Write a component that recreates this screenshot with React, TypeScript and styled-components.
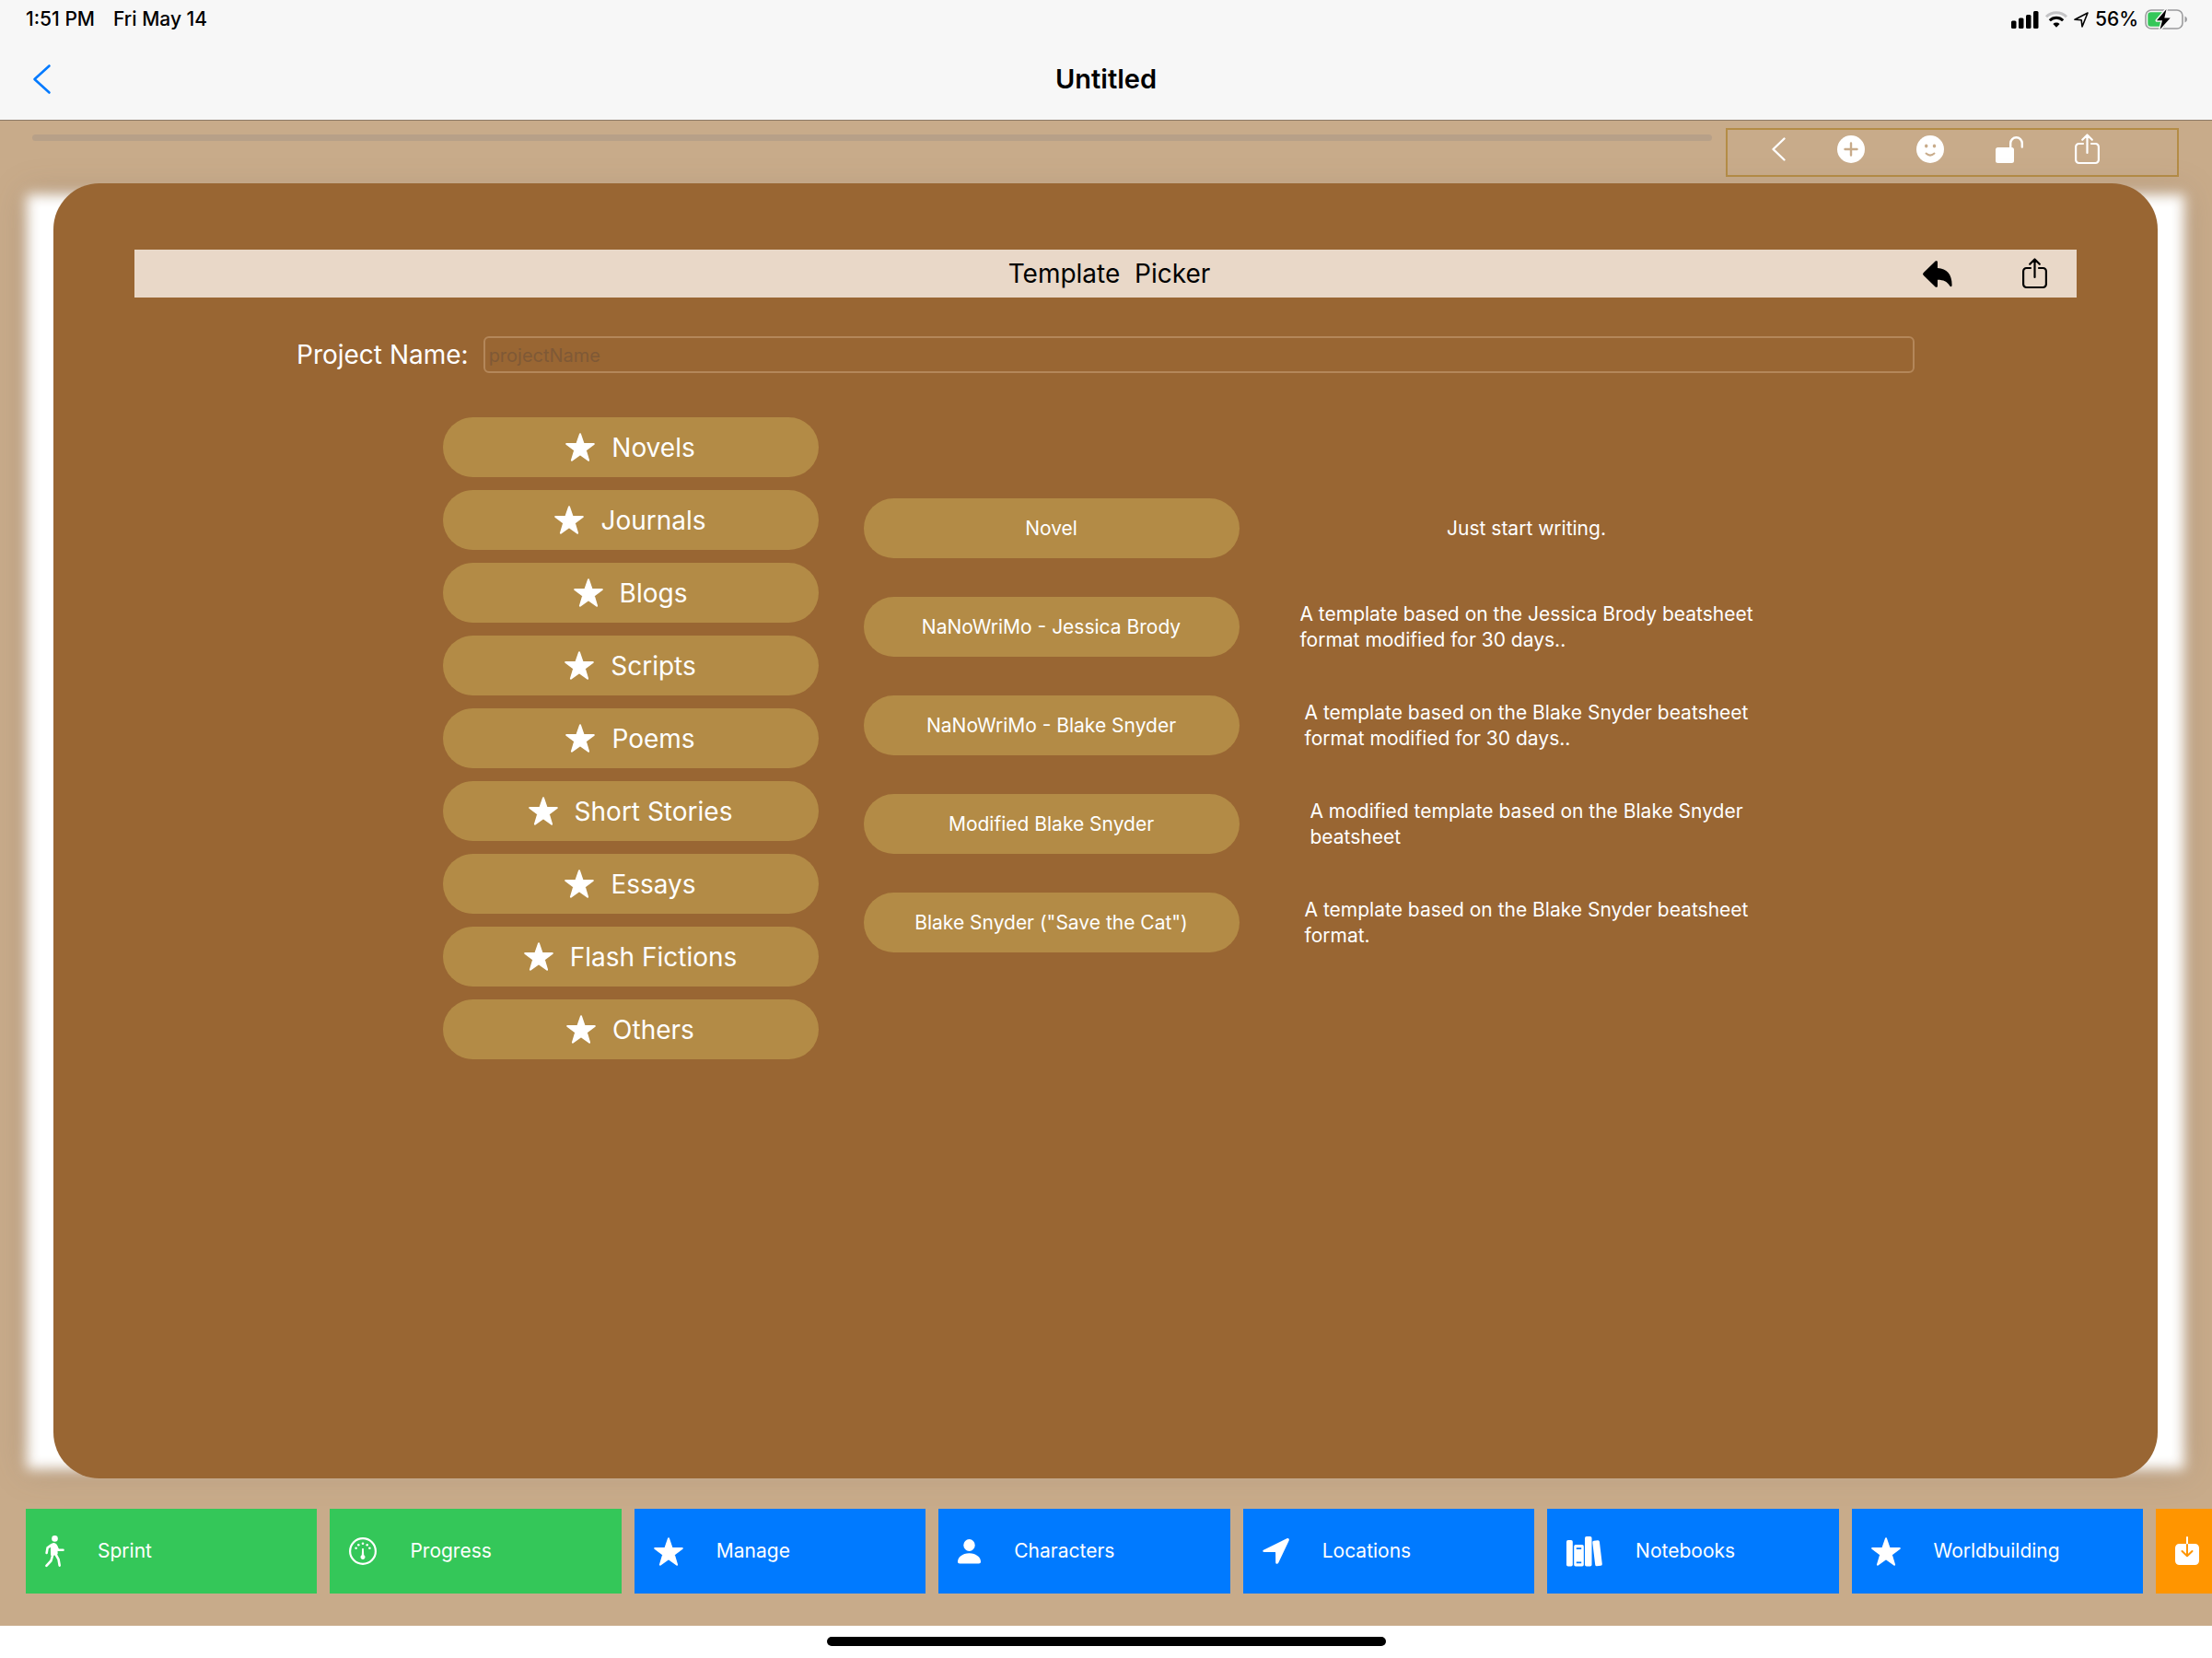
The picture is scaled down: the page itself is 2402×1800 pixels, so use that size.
import React from "react";
import styled, { createGlobalStyle } from "styled-components";

const Global = createGlobalStyle`
  *, *::before { box-sizing: border-box; }
  body { margin: 0; background: #fff; }
  button, input { font: inherit; color: inherit; }
  button { border: 0; padding: 0; background: none; cursor: pointer; }
  svg { display: block; flex: none; overflow: visible; }
`;

const Page = styled.div`
  min-height: 100vh;
  display: flex;
  flex-direction: column;
  overflow-x: hidden;
  font-family: Inter, "Liberation Sans", sans-serif;
  color: #fff;
`;

const Header = styled.header`
  background: #f7f7f7;
  border-bottom: 1px solid #8c7a66;
  color: #000;
  height: 131px;
`;

const StatusBar = styled.div`
  display: flex;
  align-items: center;
  gap: 20px;
  height: 42px;
  padding: 0 27px 0 28px;
  font-size: 21px;
  line-height: 24px;
  font-weight: 500;
`;

const StatusIcons = styled.div`
  display: flex;
  align-items: center;
  gap: 7px;
  margin-left: auto;
`;

const TitleBar = styled.div`
  display: grid;
  grid-template-columns: 1fr auto 1fr;
  align-items: center;
  height: 88px;
  padding: 0 36px;
`;

const Title = styled.h1`
  margin: 0;
  font-size: 29px;
  line-height: 36px;
  font-weight: 600;
`;

const BackButton = styled.button`
  justify-self: start;
  color: #007aff;
`;

const Workspace = styled.main`
  flex: 1;
  display: flex;
  flex-direction: column;
  background: #c8ab8a;
`;

const ToolRow = styled.div`
  display: flex;
  align-items: flex-start;
  gap: 15px;
  height: 68px;
  padding: 8px 36px 0 35px;
`;

const Track = styled.div`
  flex: 1;
  height: 7px;
  margin-top: 7px;
  border-radius: 4px;
  background: #b7a088;
`;

const Toolbar = styled.div`
  display: flex;
  align-items: flex-start;
  gap: 56px;
  width: 492px;
  height: 53px;
  padding: 4px 48px;
  border: 2px solid #b48c46;
`;

const ToolButton = styled.button`
  display: flex;
  align-items: center;
  height: 34px;
`;

const Stage = styled.div`
  position: relative;
  flex: 1;
  display: flex;
  margin: 0 30px 0 29px;
  padding: 0 29px;
  &::before {
    content: "";
    position: absolute;
    inset: 12px 0 10px;
    background: #fff;
    filter: blur(7px) drop-shadow(0 0 16px rgba(90, 80, 70, 0.25));
  }
`;

const Panel = styled.section`
  position: relative;
  flex: 1;
  padding: 72px 88px;
  border-radius: 50px;
  background: #996633;
`;

const PickerBar = styled.div`
  display: grid;
  grid-template-columns: 1fr auto 1fr;
  align-items: center;
  height: 52px;
  padding: 0 32px 0 40px;
  background: #e9d8c8;
  color: #000;
`;

const PickerTitle = styled.h2`
  grid-column: 2;
  margin: 0;
  font-size: 28px;
  line-height: 36px;
  font-weight: 400;
  white-space: pre;
`;

const PickerActions = styled.div`
  display: flex;
  align-items: center;
  justify-content: flex-end;
  gap: 76px;
`;

const NameField = styled.div`
  display: flex;
  align-items: center;
  gap: 16px;
  margin: 42px 176px 0;
`;

const NameLabel = styled.label`
  font-size: 28px;
  line-height: 36px;
`;

const NameInput = styled.input`
  flex: 1;
  min-width: 0;
  height: 40px;
  padding: 2px 4px 0;
  border: 2px solid #b4875a;
  border-radius: 6px;
  background: transparent;
  font-size: 20px;
  outline: 0;
  &::placeholder { color: #7f5936; opacity: 1; }
`;

const Picker = styled.div`
  display: flex;
  justify-content: center;
  gap: 49px;
  margin-top: 48px;
`;

const Categories = styled.nav`
  display: flex;
  flex-direction: column;
  gap: 14px;
`;

const Pill = styled.button<{ $large?: boolean }>`
  display: flex;
  align-items: center;
  justify-content: center;
  gap: 18px;
  width: 408px;
  height: 65px;
  border-radius: 33px;
  background: #b38b46;
  font-size: ${(p) => (p.$large ? 28 : 21)}px;
  line-height: ${(p) => (p.$large ? 36 : 28)}px;
`;

const Templates = styled.ul`
  display: flex;
  flex-direction: column;
  gap: 42px;
  margin: 0;
  padding: 88px 0 0;
  list-style: none;
`;

const TemplateRow = styled.li`
  display: grid;
  grid-template-columns: 408px 526px;
  align-items: center;
  gap: 49px;
  height: 65px;
`;

const Description = styled.p`
  justify-self: center;
  margin: 0;
  font-size: 21px;
  line-height: 28px;
  white-space: pre-line;
`;

const Tiles = styled.nav`
  display: flex;
  gap: 14px;
  padding: 33px 0 35px 28px;
  overflow: hidden;
`;

const Tile = styled.button<{ $color: string }>`
  flex: 0 0 calc((100% - 159px) / 7);
  display: flex;
  align-items: center;
  gap: 36px;
  height: 92px;
  padding-left: 21px;
  background: ${(p) => p.$color};
  font-size: 21px;
  line-height: 28px;
`;

const HomeArea = styled.footer`
  display: flex;
  justify-content: center;
  height: 35px;
  padding-top: 12px;
  background: #fff;
`;

const HomeIndicator = styled.div`
  width: 607px;
  height: 10px;
  border-radius: 5px;
  background: #000;
`;

const Star = () => (
  <svg width="32" height="31" viewBox="0 0 32 31" fill="currentColor" stroke="currentColor" strokeWidth="2" strokeLinejoin="round">
    <path d="M16 1.2l3.6 10.6 11.2.1-9 6.8 3.3 11L16 23.2l-9.1 6.5 3.3-11-9-6.8 11.2-.1z" />
  </svg>
);

const Chevron = ({ w, h, s }: { w: number; h: number; s: number }) => (
  <svg width={w} height={h} viewBox={`0 0 ${w} ${h}`} fill="none" stroke="currentColor" strokeWidth={s} strokeLinecap="round" strokeLinejoin="round">
    <path d={`M${w - 1.5} 1.5L1.5 ${h / 2}L${w - 1.5} ${h - 1.5}`} />
  </svg>
);

const Share = () => (
  <svg width="27" height="34" viewBox="0 0 27 34" fill="none" stroke="currentColor" strokeWidth="2.2" strokeLinecap="round" strokeLinejoin="round">
    <path d="M9 11H4.5A3.4 3.4 0 0 0 1.1 14.4v14.2A3.4 3.4 0 0 0 4.5 32h18a3.4 3.4 0 0 0 3.4-3.4V14.4A3.4 3.4 0 0 0 22.5 11H18M13.5 21V1.6M8.2 6.8l5.3-5.3 5.3 5.3" />
  </svg>
);

const PlusCircle = () => (
  <svg width="30" height="30" viewBox="0 0 30 30">
    <circle cx="15" cy="15" r="15" fill="currentColor" />
    <path d="M15 8.5v13M8.5 15h13" stroke="#c8ab8a" strokeWidth="2.4" strokeLinecap="round" />
  </svg>
);

const Smiley = () => (
  <svg width="30" height="30" viewBox="0 0 30 30">
    <circle cx="15" cy="15" r="15" fill="currentColor" />
    <ellipse cx="10.7" cy="11.5" rx="1.7" ry="2.1" fill="#c8ab8a" />
    <ellipse cx="19.5" cy="11.5" rx="1.7" ry="2.1" fill="#c8ab8a" />
    <path d="M10.5 19.6q4.5 4 9 0" fill="none" stroke="#c8ab8a" strokeWidth="2" strokeLinecap="round" />
  </svg>
);

const Unlock = () => (
  <svg width="30" height="30" viewBox="0 0 30 30">
    <rect x="0" y="13" width="20" height="17" rx="2.5" fill="currentColor" />
    <path d="M16.2 14V8.500a6.300 6.300 0 0 1 12.600 0v4" fill="none" stroke="currentColor" strokeWidth="2.4" strokeLinecap="round" />
  </svg>
);

const Reply = () => (
  <svg width="32" height="29" viewBox="0 0 32 29" fill="currentColor">
    <path d="M16 1.4v6.700c10 .4 15.600 6.700 15.600 18.400 0 1.800-1.500 2.200-2.400.8-3.200-4.800-6.600-6.400-13.200-6.500v6.800c0 1.200-1.400 1.700-2.400.8L.8 16.100a2 2 0 0 1 0-3L13.600.6c.9-.9 2.400-.4 2.400.8z" />
  </svg>
);

const Signal = () => (
  <svg width="30" height="19" viewBox="0 0 30 19" fill="currentColor">
    <rect x="0" y="10.5" width="5.5" height="8.5" rx="1.5" />
    <rect x="8" y="7.5" width="5.5" height="11.5" rx="1.5" />
    <rect x="16" y="4" width="5.5" height="15" rx="1.5" />
    <rect x="24" y="0" width="5.5" height="19" rx="1.5" />
  </svg>
);

const Wifi = () => (
  <svg width="24" height="18" viewBox="0 0 24 18" fill="none" stroke="currentColor" strokeWidth="3">
    <path d="M1 6.2a15.6 15.6 0 0 1 22 0" stroke="#c4c4c6" />
    <path d="M4.8 10.3a10.2 10.2 0 0 1 14.4 0" />
    <path d="M12 17.8l-3.6-3.7a5.1 5.1 0 0 1 7.2 0z" fill="currentColor" stroke="none" />
  </svg>
);

const LocationOutline = () => (
  <svg width="16" height="17" viewBox="0 0 16 17" fill="none" stroke="currentColor" strokeWidth="1.6" strokeLinejoin="round">
    <path d="M15 1L1 8.300l7.200.5.800 7.200z" />
  </svg>
);

const Battery = () => (
  <svg width="46" height="22" viewBox="0 0 46 22">
    <rect x="1" y="1" width="40" height="20" rx="6" fill="none" stroke="#9b9b9d" strokeWidth="1.6" />
    <path d="M43.500 7.500q2.500 1 2.500 3.500t-2.500 3.500z" fill="#9b9b9d" />
    <path d="M6.500 3.200h15.500v15.600H6.500a3.200 3.200 0 0 1-3.200-3.200V6.400a3.200 3.200 0 0 1 3.200-3.200z" fill="#34c759" />
    <path d="M23.500 0L13 12.300h6L16.500 22l11.200-12.600h-6.400z" fill="#000" stroke="#f7f7f7" strokeWidth="3" paintOrder="stroke" strokeLinejoin="round" />
  </svg>
);

const Walk = () => (
  <svg width="21" height="34" viewBox="0 0 21 34" fill="none" stroke="currentColor" strokeWidth="2.6" strokeLinecap="round" strokeLinejoin="round">
    <circle cx="10.5" cy="3.4" r="3.3" fill="currentColor" stroke="none" />
    <path d="M7.2 10.2q3.400-2 4.800 1l.4 8.300-5 1.500z" fill="currentColor" />
    <path d="M6.800 10.400l-4.200 3-1 5.600M12 11.500l2.200 4.300h5.300M8 22l-1.600 5.500-5 5.300M11.800 21l2.700 4.800 1.200 6.800" />
  </svg>
);

const Gauge = () => (
  <svg width="30" height="30" viewBox="0 0 30 30" fill="currentColor">
    <circle cx="15" cy="15" r="13.9" fill="none" stroke="currentColor" strokeWidth="2.2" />
    <circle cx="7.6" cy="11.8" r="1.3" />
    <circle cx="10.3" cy="8.3" r="1.3" />
    <circle cx="15" cy="6.8" r="1.3" />
    <circle cx="19.7" cy="8.3" r="1.3" />
    <circle cx="22.4" cy="11.8" r="1.3" />
    <path d="M14.2 12h1.600l.4 7.300a2.500 2.500 0 1 1-2.400 0z" />
  </svg>
);

const Person = () => (
  <svg width="25" height="27" viewBox="0 0 25 27" fill="currentColor">
    <ellipse cx="12.5" cy="6.5" rx="6.2" ry="6.5" />
    <path d="M2.2 26.5C.7 26.500 0 25.700 0 24.300c0-4.200 4.800-9 12.500-9S25 20.100 25 24.300c0 1.400-.7 2.200-2.200 2.200z" />
  </svg>
);

const LocationFill = () => (
  <svg width="29" height="28" viewBox="0 0 29 28" fill="currentColor">
    <path d="M1.6 12.4L26.400.3c1.700-.8 3 .6 2.300 2.200L17.200 26.800c-.7 1.600-3 1.400-3-.6l-.1-10.500c0-.4-.1-.6-.5-.6l-11.300-.1C.1 15-.5 13.300 1.600 12.400z" />
  </svg>
);

const Books = () => (
  <svg width="39" height="33" viewBox="0 0 39 33" fill="currentColor">
    <rect x="0" y="4" width="6.800" height="28.500" rx="1.8" />
    <path fillRule="evenodd" d="M10 9h7a1.800 1.800 0 0 1 1.800 1.800v20a1.800 1.800 0 0 1-1.800 1.800h-7a1.800 1.800 0 0 1-1.800-1.800v-20A1.800 1.800 0 0 1 10 9zm.8 3.300v1.800h5.400v-1.800zm0 15.200v1.800h5.400v-1.800z" />
    <rect x="20" y="0" width="7.500" height="32.500" rx="1.8" />
    <path d="M29.8 4.800l4.200-.6a1.700 1.700 0 0 1 1.900 1.500l2.900 24.200a1.700 1.700 0 0 1-1.500 1.900l-4.200.5a1.700 1.700 0 0 1-1.900-1.500L28.300 6.700a1.700 1.700 0 0 1 1.500-1.900z" />
  </svg>
);

const Import = () => (
  <svg width="26" height="32" viewBox="0 0 26 32" fill="none" strokeWidth="2" strokeLinecap="round" strokeLinejoin="round">
    <path d="M4.500 8h17A4.500 4.500 0 0 1 26 12.500v14a4.500 4.500 0 0 1-4.500 4.500h-17A4.500 4.500 0 0 1 0 26.500v-14A4.500 4.500 0 0 1 4.500 8z" fill="currentColor" />
    <path d="M13 8V1" stroke="currentColor" />
    <path d="M13 9v12M7.500 16l5.500 5.300 5.500-5.300" stroke="#ff9500" />
  </svg>
);

const categories = ["Novels", "Journals", "Blogs", "Scripts", "Poems", "Short Stories", "Essays", "Flash Fictions", "Others"];

const templates = [
  { name: "Novel", text: "Just start writing." },
  { name: "NaNoWriMo - Jessica Brody", text: "A template based on the Jessica Brody beatsheet\nformat modified for 30 days.." },
  { name: "NaNoWriMo - Blake Snyder", text: "A template based on the Blake Snyder beatsheet\nformat modified for 30 days.." },
  { name: "Modified Blake Snyder", text: "A modified template based on the Blake Snyder\nbeatsheet" },
  { name: 'Blake Snyder ("Save the Cat")', text: "A template based on the Blake Snyder beatsheet\nformat." },
];

const GREEN = "#34c759";
const BLUE = "#007aff";

const tiles = [
  { label: "Sprint", color: GREEN, Icon: Walk },
  { label: "Progress", color: GREEN, Icon: Gauge },
  { label: "Manage", color: BLUE, Icon: Star },
  { label: "Characters", color: BLUE, Icon: Person },
  { label: "Locations", color: BLUE, Icon: LocationFill },
  { label: "Notebooks", color: BLUE, Icon: Books },
  { label: "Worldbuilding", color: BLUE, Icon: Star },
];

export default function App() {
  return (
    <Page>
      <Global />
      <Header>
        <StatusBar>
          <span>1:51 PM</span>
          <span>Fri May 14</span>
          <StatusIcons>
            <Signal />
            <Wifi />
            <LocationOutline />
            <span>56%</span>
            <Battery />
          </StatusIcons>
        </StatusBar>
        <TitleBar>
          <BackButton aria-label="Back"><Chevron w={19} h={32} s={2.6} /></BackButton>
          <Title>Untitled</Title>
        </TitleBar>
      </Header>
      <Workspace>
        <ToolRow>
          <Track />
          <Toolbar>
            <ToolButton aria-label="Previous"><Chevron w={15} h={26} s={2.4} /></ToolButton>
            <ToolButton aria-label="Add"><PlusCircle /></ToolButton>
            <ToolButton aria-label="Mood"><Smiley /></ToolButton>
            <ToolButton aria-label="Unlock"><Unlock /></ToolButton>
            <ToolButton aria-label="Share"><Share /></ToolButton>
          </Toolbar>
        </ToolRow>
        <Stage>
          <Panel>
            <PickerBar>
              <PickerTitle>{"Template  Picker"}</PickerTitle>
              <PickerActions>
                <button aria-label="Go back"><Reply /></button>
                <button aria-label="Share template"><Share /></button>
              </PickerActions>
            </PickerBar>
            <NameField>
              <NameLabel htmlFor="project-name">Project Name:</NameLabel>
              <NameInput id="project-name" placeholder="projectName" />
            </NameField>
            <Picker>
              <Categories>
                {categories.map((name) => (
                  <Pill key={name} $large><Star />{name}</Pill>
                ))}
              </Categories>
              <Templates>
                {templates.map((t) => (
                  <TemplateRow key={t.name}>
                    <Pill>{t.name}</Pill>
                    <Description>{t.text}</Description>
                  </TemplateRow>
                ))}
              </Templates>
            </Picker>
          </Panel>
        </Stage>
        <Tiles>
          {tiles.map(({ label, color, Icon }) => (
            <Tile key={label} $color={color}><Icon />{label}</Tile>
          ))}
          <Tile $color="#ff9500" aria-label="Import"><Import /></Tile>
        </Tiles>
      </Workspace>
      <HomeArea><HomeIndicator /></HomeArea>
    </Page>
  );
}
